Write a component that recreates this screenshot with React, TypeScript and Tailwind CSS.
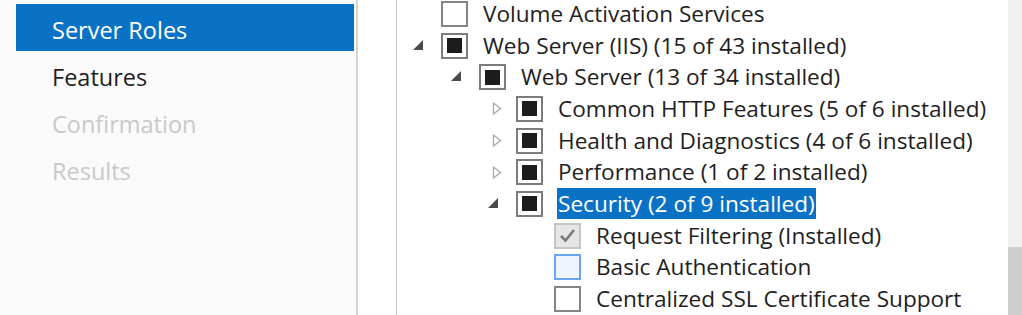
import React from "react";

type Box = "partial" | "empty" | "installed" | "hover";
type Arrow = "open" | "closed" | null;

interface Row {
  level: 0 | 1 | 2 | 3;
  arrow: Arrow;
  box: Box;
  label: string;
  selected?: boolean;
}

const ROWS: Row[] = [
  { level: 0, arrow: null, box: "empty", label: "Volume Activation Services" },
  { level: 0, arrow: "open", box: "partial", label: "Web Server (IIS) (15 of 43 installed)" },
  { level: 1, arrow: "open", box: "partial", label: "Web Server (13 of 34 installed)" },
  { level: 2, arrow: "closed", box: "partial", label: "Common HTTP Features (5 of 6 installed)" },
  { level: 2, arrow: "closed", box: "partial", label: "Health and Diagnostics (4 of 6 installed)" },
  { level: 2, arrow: "closed", box: "partial", label: "Performance (1 of 2 installed)" },
  { level: 2, arrow: "open", box: "partial", label: "Security (2 of 9 installed)", selected: true },
  { level: 3, arrow: null, box: "installed", label: "Request Filtering (Installed)" },
  { level: 3, arrow: null, box: "hover", label: "Basic Authentication" },
  { level: 3, arrow: null, box: "empty", label: "Centralized SSL Certificate Support" },
];

const INDENT = ["pl-[12px]", "pl-[50px]", "pl-[87px]", "pl-[125px]"];

const NAV = [
  { label: "Server Roles", state: "active" },
  { label: "Features", state: "normal" },
  { label: "Confirmation", state: "disabled" },
  { label: "Results", state: "disabled" },
];

function Expander({ arrow }: { arrow: Arrow }) {
  if (arrow === "open") {
    return (
      <svg width="12" height="12" viewBox="0 0 12 12" className="ml-[3px] mt-[-2px]">
        <polygon points="11,1 11,11 1,11" fill="#4a4a4a" />
      </svg>
    );
  }
  if (arrow === "closed") {
    return (
      <svg width="10" height="13" viewBox="0 0 10 13" className="ml-[8px]">
        <polygon points="1.5,1 8.5,6.5 1.5,12" fill="none" stroke="#a8a8a8" strokeWidth="1.3" />
      </svg>
    );
  }
  return null;
}

function CheckBox({ box }: { box: Box }) {
  if (box === "partial") {
    return (
      <div className="w-[27px] h-[26px] border-2 border-[#7c7c7c] bg-white flex items-center justify-center shrink-0">
        <div className="w-[15px] h-[15px] bg-[#1c1c1c]" />
      </div>
    );
  }
  if (box === "installed") {
    return (
      <div className="w-[27px] h-[26px] border-2 border-[#c6c6c6] bg-[#e6e6e6] flex items-center justify-center shrink-0">
        <svg width="17" height="15" viewBox="0 0 17 15">
          <polyline points="2,8 6.5,12.5 15,2" fill="none" stroke="#7a7a7a" strokeWidth="2.6" />
        </svg>
      </div>
    );
  }
  if (box === "hover") {
    return <div className="w-[27px] h-[26px] border-2 border-[#6aa6ee] bg-[#eef5fd] shrink-0" />;
  }
  return <div className="w-[27px] h-[26px] border-2 border-[#858585] bg-white shrink-0" />;
}

export default function App() {
  return (
    <div
      className="flex w-[1022px] h-[315px] overflow-hidden bg-white"
      style={{ fontFamily: '"Open Sans", "Noto Sans", sans-serif' }}
    >
      {/* wizard steps */}
      <div className="w-[358px] shrink-0 bg-[#fafafa] border-r-2 border-[#d4d4d4] pt-[4px]">
        {NAV.map((item) => (
          <div
            key={item.label}
            className={
              item.state === "active"
                ? "ml-[16px] mr-[2px] h-[47px] pl-[36px] pt-[7px] flex items-center text-[23.5px] text-white bg-[#0a72c4]"
                : item.state === "normal"
                ? "ml-[16px] mr-[2px] h-[47px] pl-[36px] pt-[7px] flex items-center text-[23.5px] text-[#1f1f1f]"
                : "ml-[16px] mr-[2px] h-[47px] pl-[36px] pt-[7px] flex items-center text-[23.5px] text-[#c9c9c9]"
            }
          >
            {item.label}
          </div>
        ))}
      </div>

      <div className="w-[39px] shrink-0 bg-white border-r border-[#c9c9c9]" />

      {/* role tree */}
      <div className="flex-1 mt-[-2px] text-[22.6px] text-[#1e1e1e]">
        {ROWS.map((row) => (
          <div key={row.label} className={`flex items-center h-[31.7px] ${INDENT[row.level]}`}>
            <div className="w-[32px] shrink-0 flex items-center">
              <Expander arrow={row.arrow} />
            </div>
            <CheckBox box={row.box} />
            <span
              className={
                row.selected
                  ? "ml-[14px] pl-[1px] pr-[1px] leading-[31px] whitespace-nowrap bg-[#0a72c4] text-white"
                  : "ml-[15px] leading-[26px] whitespace-nowrap"
              }
            >
              {row.label}
            </span>
          </div>
        ))}
      </div>

      {/* scrollbar */}
      <div className="w-[14px] shrink-0 bg-[#f0f0f0] flex flex-col">
        <div className="mt-[247px] flex-1 bg-[#cdcdcd]" />
      </div>
    </div>
  );
}
